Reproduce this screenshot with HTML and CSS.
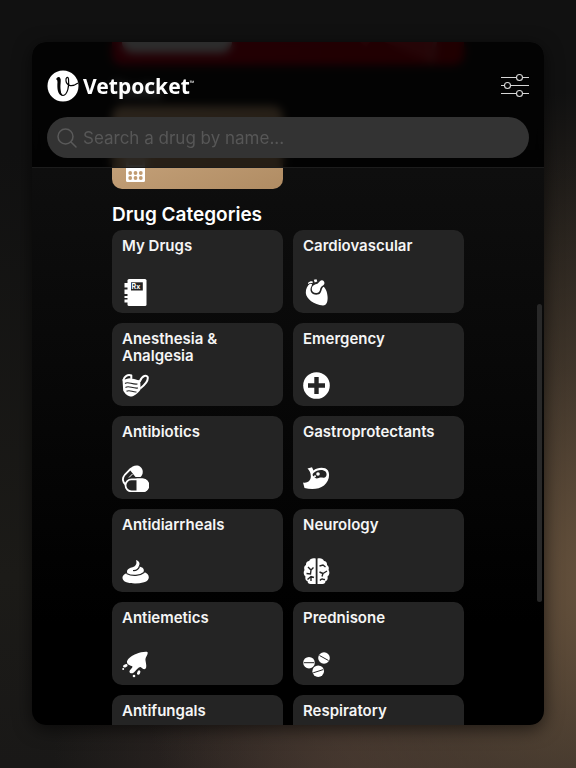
FILE: index.html
```html
<!DOCTYPE html>
<html lang="en">
<head>
<meta charset="utf-8">
<meta name="viewport" content="width=device-width, initial-scale=1">
<title>Vetpocket</title>
<link rel="stylesheet" href="styles.css">
</head>
<body>

<div class="window">

  <header class="header">
    <div class="topbar">
      <a class="brand" href="#">
        <svg class="brand-mark" viewBox="0 0 32 32" aria-hidden="true">
          <circle cx="16" cy="16" r="15.5" fill="#fff"/>
          <path d="M9.5 9.5C11 7 13 7 12.7 10C12.2 16 12 25 16 25.5C20.5 25 22.5 16 21.5 9C21 6 18.5 7.5 19 11C19.5 15 24 18 31 13" fill="none" stroke="#050505" stroke-width="1.2"/>
          <path d="M9.8 8.5C13.7 6.5 13.9 9 13.6 13C13.2 18 13.400 23 15.500 25.500C10.500 25.500 10 18 10.500 12Z" fill="#050505"/>
        </svg>
        <span class="brand-name">Vetpocket<span class="tm">™</span></span>
      </a>
      <button class="filter" type="button" aria-label="Filters">
        <svg viewBox="0 0 28 26" fill="none" stroke="#d6d6d6" stroke-width="1.1">
          <path d="M0 4.500H15.500M21.500 4.500H28M0 12.500H3.500M9.500 12.500H28M0 20.500H15.500M21.500 20.500H28"/>
          <circle cx="18.500" cy="4.500" r="3"/>
          <circle cx="6.500" cy="12.500" r="3"/>
          <circle cx="18.500" cy="20.500" r="3"/>
        </svg>
      </button>
    </div>
    <label class="search">
      <svg viewBox="0 0 20 20" fill="none" stroke="#5a5a5a" stroke-width="1.5" stroke-linecap="round" aria-hidden="true">
        <circle cx="8.500" cy="8.500" r="7.500"/>
        <path d="M14 14L19 19"/>
      </svg>
      <input type="search" placeholder="Search a drug by name..." aria-label="Search a drug by name">
    </label>
  </header>

  <main class="content">
    <div class="banner">
      <span class="banner-button"></span>
      <svg class="banner-art" viewBox="0 0 90 23" aria-hidden="true">
        <path d="M0 0H10L6 5ZM24 0H74L70 19Z" fill="#e04a55"/>
        <path d="M73 0H77L74 20H70Z" fill="#c9a0a0"/>
      </svg>
    </div>

    <h2>Tools</h2>
    <div class="grid">
      <a class="card card-tool" href="#" aria-label="Calculators">
        <svg viewBox="0 0 27 27" aria-hidden="true">
          <path fill="#fff" d="M6 0H21Q23 0 23 2V25.500Q23 27 21.500 27H5.500Q4 27 4 25.500V2Q4 0 6 0Z"/>
          <g fill="#c19c72">
            <rect x="6.500" y="3" width="14" height="7"/>
            <circle cx="8.200" cy="18" r="1.900"/><circle cx="13.500" cy="18" r="1.900"/><circle cx="18.800" cy="18" r="1.900"/>
            <circle cx="8.200" cy="23" r="1.900"/><circle cx="13.500" cy="23" r="1.900"/><circle cx="18.800" cy="23" r="1.900"/>
          </g>
        </svg>
      </a>
    </div>

    <h2>Drug Categories</h2>
    <div class="grid">
      <a class="card" href="#">
        <span>My Drugs</span>
        <svg viewBox="0 0 27 27" aria-hidden="true">
          <rect x="5.500" width="19" height="27" rx="1.500" fill="#fff"/>
          <path fill="#fff" d="M2.500 4H7V8.500H2.500ZM2.500 10.500H7V15H2.500ZM2.500 17H7V19H2.500ZM2.500 20.500H7V23.500H2.500Z"/>
          <rect x="9" y="3.300" width="11.800" height="8.200" fill="#242424"/>
          <text class="rx" x="9.600" y="10">Rx</text>
        </svg>
      </a>

      <a class="card" href="#">
        <span>Cardiovascular</span>
        <svg viewBox="0 0 27 27" fill="#fff" aria-hidden="true">
          <path d="M7 4.800C4.500 6.500 2.600 10 2.800 14C3.200 20 11 25.500 20 26.500C24 26.500 24.800 22 24.600 18C24.400 13 22.500 9 20.500 7.800C18 9.500 19 14 15.800 15.300C10.500 16.800 7.200 13.800 7.500 10C7.800 7.500 9.300 6.500 9 5Z"/>
          <path d="M8.800 10C8.800 6.500 11.800 5.500 14.800 4.500C16.500 2.500 17.500 1 19.200 1.200C21 1.500 21.800 3.500 21.300 5C20.300 7 18 7 17.300 9.500C17 12.500 15.500 14 13.300 14.100C10.800 14.200 8.800 12.500 8.800 10Z"/>
          <path d="M5 4C6 2.500 8 2 9.500 2.300L9.800 4.200C8 3.600 6.300 4.200 5 5ZM10.800 .8L13.500 .2L14.300 2.500L11.700 3.500Z"/>
        </svg>
      </a>

      <a class="card" href="#">
        <span>Anesthesia &amp; Analgesia</span>
        <svg viewBox="0 0 27 27" aria-hidden="true">
          <path d="M1.500 8C2 4.500 6 1.800 9.300 3.500V6M18 9C20.500 3 24.500 3 25.700 5C26.500 9 22 13.500 18.800 16" fill="none" stroke="#fff" stroke-width="2" stroke-linecap="round"/>
          <path fill="#fff" d="M.5 7.500C3 8 5 6 8.500 6.200C12 6.500 15 8.500 18.200 8.200L18.600 17.500C17 20 13.500 23.500 10 24.500C6 24.700 3 22 1.200 18.500Z"/>
          <path d="M3 11.500C6 9 10 12.800 15.500 12M3.500 15.500C7 13 10.500 17 16 16M4.500 19.300C8 17.200 10.500 20.500 14.500 20" fill="none" stroke="#242424" stroke-width="1.100"/>
        </svg>
      </a>

      <a class="card" href="#">
        <span>Emergency</span>
        <svg viewBox="0 0 27 27" aria-hidden="true">
          <circle cx="13.500" cy="13.500" r="13.300" fill="#fff"/>
          <path d="M13.500 5V22M5 13.500H22" stroke="#242424" stroke-width="4.400"/>
        </svg>
      </a>

      <a class="card" href="#">
        <span>Antibiotics</span>
        <svg viewBox="0 0 27 27" aria-hidden="true">
          <path d="M9 3.500L3 9.500C-.5 13.500 1 17.500 3.500 19.500" fill="none" stroke="#fff" stroke-width="1.800"/>
          <path fill="#fff" d="M7.500 4.500C10 1 15 -1 18.500 2C21.800 5 21.200 9.500 18.500 12H13.500Z"/>
          <path d="M7 12.500L10.500 9" stroke="#fff" stroke-width="1"/>
          <rect x="3.500" y="14.300" width="23" height="12" rx="6" fill="#242424" stroke="#fff" stroke-width="1.800"/>
          <path fill="#fff" d="M14.500 13.500H20.500C28.800 13.500 28.800 27 20.500 27H14.500Z"/>
        </svg>
      </a>

      <a class="card" href="#">
        <span>Gastroprotectants</span>
        <svg viewBox="0 0 27 27" aria-hidden="true">
          <path fill="#fff" d="M4.500 3.500L9 2.300L10.500 5.500C14 2.500 22 1.500 25 5.500C27.500 10 25.500 17 21 20.500C16 24.500 8 24.500 1.500 23L0 17.500C4 18.500 7.500 16 7.800 12C8 8 6.500 5.500 4.500 3.500Z"/>
          <path fill="#242424" d="M10.500 8C14 4.500 20 4 22.500 6.500C24.500 9 23.500 12.500 21 12.700C18.500 12.800 18 12 15.800 13C13 14.200 11.800 12.800 11.200 11.500C9.500 11 9 9.500 10.500 8Z"/>
          <circle cx="15" cy="9" r="1.800" fill="#fff"/>
          <circle cx="12" cy="11.300" r="1" fill="#fff"/>
        </svg>
      </a>

      <a class="card" href="#">
        <span>Antidiarrheals</span>
        <svg viewBox="0 0 27 27" aria-hidden="true">
          <path fill="#fff" d="M14 2C19 4 17.500 7 16.500 8.500C21.500 9 22.500 11.500 21.500 14C28 15 29 22.500 22 24.300C16 26 9 25.800 4.500 24.300C-1.500 22.500 -.5 16 5.300 15.200C4 11.500 7.500 10 10.500 9.200C14.500 8.200 15 5 14 2Z"/>
          <path d="M4.500 15.500C10 18.500 18 18 22.500 14.300M11 12.500C14 12.800 16.500 11 17.500 8.500" fill="none" stroke="#242424" stroke-width="1.200"/>
        </svg>
      </a>

      <a class="card" href="#">
        <span>Neurology</span>
        <svg viewBox="0 0 27 27" aria-hidden="true">
          <path fill="#fff" d="M12.700 .5V26H8.500C6 26.500 4.500 25 4.500 23C2.500 22.500 2 20.500 2.500 18.500C.5 17 .2 14 1.500 12C.7 9.500 1.300 8 3 7C2.800 4.500 4.300 3 6.200 3C7 .5 10 -.3 12.700 .5ZM14.500 .5C17.500 -.3 20 .5 21 3C23 3 24.300 4.800 24 7C25.800 8.300 26.200 10 25.500 12C27 14 26.500 17 24.500 18.500C25 20.500 24.500 22.500 22.500 23C22.500 25 21 26.500 18.500 26H14.500Z"/>
          <path d="M5 9L8 12L10.500 9.500M8 12L7.500 16L3.500 15.500M4.500 21.500L8 18.500L11 19.500M8 18.500L8 23M16.500 8L20 7L22.500 9M16.500 14L20 15.500L19 18.500M20 15.500L24 13M17 22.500C19 19.500 20.500 22 22 21.500" fill="none" stroke="#242424" stroke-width="1.400"/>
        </svg>
      </a>

      <a class="card" href="#">
        <span>Antiemetics</span>
        <svg viewBox="0 0 27 27" fill="#fff" aria-hidden="true">
          <path d="M25.500 1C26.500 4 23 6 23.500 9.500C24 13 25 16 23.500 17.800C21.500 19 20.500 17 18.500 16C16.500 16 14 19.500 11.500 21.800C9.500 23 7 22 7.500 20C8 18.500 10.500 17 10.500 15.500C8.500 14.500 4.500 13.500 5 10.500C6 7 10.500 4.300 14 3C18 1.500 22.500 .5 25.500 1Z"/>
          <ellipse cx="3.300" cy="14.800" rx="2.400" ry="1.500" transform="rotate(-20 3.300 14.800)"/>
          <circle cx="1.200" cy="18" r="1"/>
          <ellipse cx="16.700" cy="21.600" rx="1.500" ry="2.300" transform="rotate(25 16.700 21.600)"/>
          <circle cx="12" cy="25" r="1.300"/>
        </svg>
      </a>

      <a class="card" href="#">
        <span>Prednisone</span>
        <svg viewBox="0 0 27 27" aria-hidden="true">
          <g fill="#fff">
            <circle cx="6" cy="11.700" r="5.800"/>
            <circle cx="21" cy="7" r="5.800"/>
            <circle cx="15.200" cy="20.200" r="5.800"/>
          </g>
          <path d="M.8 11.700H11.200M16.500 4.500L25.500 9.500M10.200 21.800L20.200 18.600" stroke="#242424" stroke-width="1"/>
        </svg>
      </a>

      <a class="card" href="#"><span>Antifungals</span></a>
      <a class="card" href="#"><span>Respiratory</span></a>
    </div>
  </main>

  <div class="scroll-thumb"></div>
</div>

</body>
</html>
```
FILE: styles.css
```css
* {
  box-sizing: border-box;
}

body {
  margin: 0;
  height: 100vh;
  padding: 42px 32px 43px;
  overflow: hidden;
  font-family: Inter, "Open Sans", sans-serif;
  color: #f5f5f5;
  background:
    radial-gradient(circle at 108% 76%, #69543e 0, rgba(90, 73, 56, 0.6) 26%, rgba(60, 48, 40, 0) 58%),
    radial-gradient(ellipse at 60% 108%, #3c2f2b 0, rgba(50, 40, 36, 0) 60%),
    linear-gradient(#111 20%, #1c1b18 75%, #191817);
}

a {
  color: inherit;
  text-decoration: none;
}

.window {
  position: relative;
  height: 100%;
  overflow: hidden;
  border-radius: 14px;
  background: linear-gradient(#121212, #000 85%);
  box-shadow: 0 4px 18px rgba(0, 0, 0, 0.6);
}

/* header floats over the scrolled content */
.header {
  position: absolute;
  z-index: 1;
  top: 0;
  left: 0;
  right: 0;
  display: flex;
  flex-direction: column;
  gap: 15px;
  padding: 28px 15px 9px;
  border-bottom: 1px solid #1c1c1c;
  background: rgba(0, 0, 0, 0.8);
  backdrop-filter: blur(4px);
}

.topbar {
  display: flex;
  align-items: center;
  justify-content: space-between;
  height: 32px;
}

.brand {
  display: flex;
  align-items: center;
  gap: 4px;
}

.brand-mark {
  width: 32px;
  height: 32px;
}

.brand-name {
  font: 700 21px/28px "Noto Sans", sans-serif;
  color: #fff;
}

.tm {
  font-size: 6px;
  line-height: 1;
  vertical-align: 9px;
}

.filter {
  padding: 0;
  border: 0;
  background: none;
}

.filter svg {
  display: block;
  width: 28px;
  height: 26px;
}

.search {
  display: flex;
  align-items: center;
  gap: 6px;
  height: 41px;
  padding: 0 10px;
  border-radius: 21px;
  background: #333;
}

.search svg {
  width: 20px;
  height: 20px;
}

.search input {
  flex: 1;
  min-width: 0;
  padding: 0;
  border: 0;
  outline: 0;
  background: none;
  font: 17px/24px Inter, sans-serif;
  color: #eee;
}

.search input::placeholder {
  color: #575757;
}

.content {
  max-width: 352px;
  margin: 0 auto;
}

.banner {
  display: flex;
  justify-content: space-between;
  height: 23px;
  padding: 0 14px 0 10px;
  border-radius: 0 0 10px 10px;
  background: linear-gradient(100deg, #b00018, #a00008);
}

.banner-button {
  width: 110px;
  height: 11px;
  border-radius: 0 0 11px 11px;
  background: #ddd;
}

.banner-art {
  width: 90px;
  height: 23px;
  opacity: 0.4;
}

h2 {
  margin: 0;
  padding: 14px 0 3px;
  font-size: 19px;
  line-height: 24px;
  font-weight: 600;
  color: #fff;
}

.grid {
  display: grid;
  grid-template-columns: 1fr 1fr;
  grid-auto-rows: 83px;
  gap: 10px;
}

.card {
  display: flex;
  flex-direction: column;
  justify-content: space-between;
  padding: 7px 10px;
  border-radius: 10px;
  background: #242424;
  font-size: 15px;
  line-height: 17px;
  font-weight: 600;
}

.card svg {
  width: 27px;
  height: 27px;
  margin-top: auto;
}

.card-tool {
  background: linear-gradient(160deg, #d0ad86, #b08c63);
}

.rx {
  font: 700 7px Inter, sans-serif;
  fill: #fff;
}

.scroll-thumb {
  position: absolute;
  z-index: 2;
  top: 262px;
  right: 2px;
  width: 5px;
  height: 298px;
  border-radius: 3px;
  background: #282828;
}
```
